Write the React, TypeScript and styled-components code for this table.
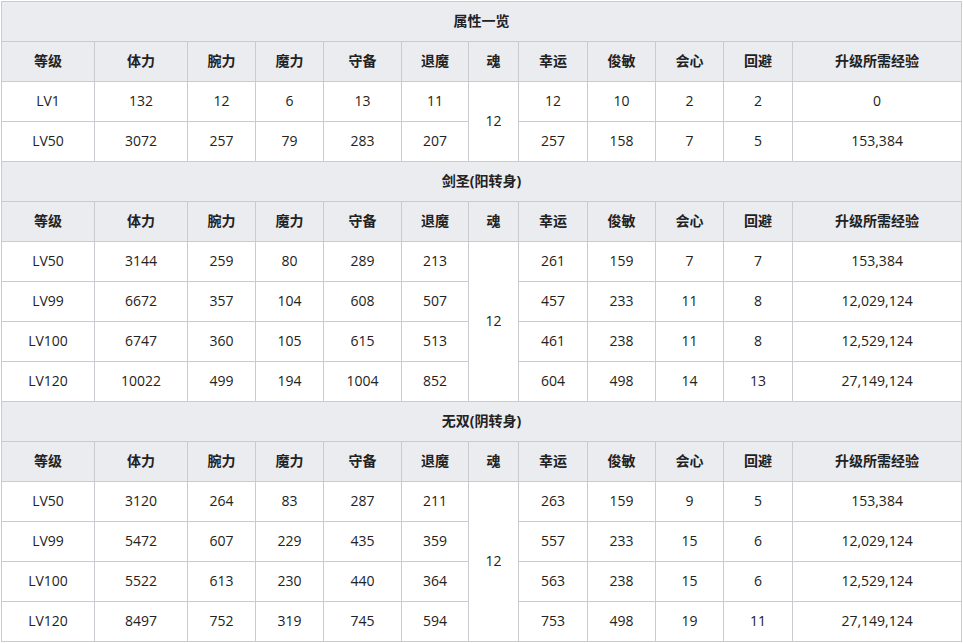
import React from "react"
import styled, { createGlobalStyle } from "styled-components"

const GlobalStyle = createGlobalStyle`
  html, body {
    margin: 0;
    padding: 0;
    background: #fff;
  }
  body {
    font-family: "Open Sans", "Noto Sans CJK SC", sans-serif;
    color: #222;
  }
`

const COLS = [93, 93, 68, 68, 78, 67, 50, 69, 68, 68, 69, 169]
const HEADERS = ["等级", "体力", "腕力", "魔力", "守备", "退魔", "魂", "幸运", "俊敏", "会心", "回避", "升级所需经验"]

type Row = string[]
type Section = { title: string; soul: string; rows: Row[] }

// each row: level, 体力, 腕力, 魔力, 守备, 退魔, 幸运, 俊敏, 会心, 回避, 经验
const SECTIONS: Section[] = [
  {
    title: "属性一览",
    soul: "12",
    rows: [
      ["LV1", "132", "12", "6", "13", "11", "12", "10", "2", "2", "0"],
      ["LV50", "3072", "257", "79", "283", "207", "257", "158", "7", "5", "153,384"]
    ]
  },
  {
    title: "剑圣(阳转身)",
    soul: "12",
    rows: [
      ["LV50", "3144", "259", "80", "289", "213", "261", "159", "7", "7", "153,384"],
      ["LV99", "6672", "357", "104", "608", "507", "457", "233", "11", "8", "12,029,124"],
      ["LV100", "6747", "360", "105", "615", "513", "461", "238", "11", "8", "12,529,124"],
      ["LV120", "10022", "499", "194", "1004", "852", "604", "498", "14", "13", "27,149,124"]
    ]
  },
  {
    title: "无双(阴转身)",
    soul: "12",
    rows: [
      ["LV50", "3120", "264", "83", "287", "211", "263", "159", "9", "5", "153,384"],
      ["LV99", "5472", "607", "229", "435", "359", "557", "233", "15", "6", "12,029,124"],
      ["LV100", "5522", "613", "230", "440", "364", "563", "238", "15", "6", "12,529,124"],
      ["LV120", "8497", "752", "319", "745", "594", "753", "498", "19", "11", "27,149,124"]
    ]
  }
]

const Table = styled.table`
  margin: 1px 0 0 1px;
  width: 961px;
  table-layout: fixed;
  border-collapse: collapse;
  font-size: 14px;
  line-height: 20px;
`

const Cell = styled.td<{ $head?: boolean }>`
  height: 40px;
  padding: 0 4px 2px;
  box-sizing: border-box;
  border: 1px solid #c8ccd1;
  text-align: center;
  vertical-align: middle;
  background: ${(p) => (p.$head ? "#eaecf0" : "#fff")};
  font-weight: ${(p) => (p.$head ? 700 : 400)};
  color: #222;
  white-space: nowrap;
`

function SectionRows({ section }: { section: Section }) {
  return (
    <>
      <tr>
        <Cell as="th" $head colSpan={12}>
          {section.title}
        </Cell>
      </tr>
      <tr>
        {HEADERS.map((h) => (
          <Cell as="th" $head key={h}>
            {h}
          </Cell>
        ))}
      </tr>
      {section.rows.map((r, i) => (
        <tr key={r[0]}>
          {r.slice(0, 6).map((v, j) => (
            <Cell key={j}>{v}</Cell>
          ))}
          {i === 0 && <Cell rowSpan={section.rows.length}>{section.soul}</Cell>}
          {r.slice(6).map((v, j) => (
            <Cell key={j + 6}>{v}</Cell>
          ))}
        </tr>
      ))}
    </>
  )
}

export default function App() {
  return (
    <>
      <GlobalStyle />
      <Table>
        <colgroup>
          {COLS.map((w, i) => (
            <col key={i} style={{ width: w }} />
          ))}
        </colgroup>
        <tbody>
          {SECTIONS.map((s) => (
            <SectionRows key={s.title} section={s} />
          ))}
        </tbody>
      </Table>
    </>
  )
}
